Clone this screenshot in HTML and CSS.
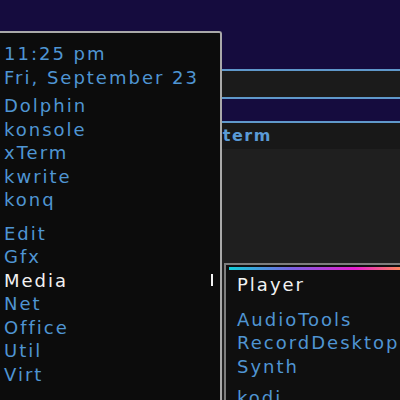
FILE: index.html
```html
<!DOCTYPE html>
<html lang="en">
<head>
    <meta charset="UTF-8">
    <title>Desktop menu</title>
    <link rel="stylesheet" href="styles.css">
</head>
<body>
    <div class="desktop">
        <div class="win win-bar"></div>

        <div class="win win-xterm">
            <div class="title">xterm</div>
            <div class="content"></div>
        </div>

        <div class="menu main-menu">
            <div class="group">
                <div class="item">11:25 pm</div>
                <div class="item">Fri, September 23</div>
            </div>
            <div class="group apps">
                <div class="item">Dolphin</div>
                <div class="item">konsole</div>
                <div class="item">xTerm</div>
                <div class="item">kwrite</div>
                <div class="item">konq</div>
            </div>
            <div class="group cats">
                <div class="item">Edit</div>
                <div class="item">Gfx</div>
                <div class="item active">Media <span class="cursor"></span></div>
                <div class="item">Net</div>
                <div class="item">Office</div>
                <div class="item">Util</div>
                <div class="item">Virt</div>
            </div>
        </div>

        <div class="menu sub-menu">
            <div class="accent"></div>
            <div class="item head">Player</div>
            <div class="group tools">
                <div class="item">AudioTools</div>
                <div class="item">RecordDesktop</div>
                <div class="item">Synth</div>
            </div>
            <div class="group progs">
                <div class="item">kodi</div>
            </div>
        </div>
    </div>
</body>
</html>
```

FILE: styles.css
```css
body {
    margin: 0;
    background: #150c3e;
    font-family: 'DejaVu Sans', sans-serif;
}
.desktop {
    position: relative;
    width: 400px;
    height: 400px;
    overflow: hidden;
    background: #150c3e;
}

/* windows behind the menu */
.win {
    position: absolute;
    left: 200px;
    right: -10px;
}
.win-bar {
    top: 69px;
    height: 26px;
    background: #1b1b1b;
    border-top: 2px solid #5f98cb;
    border-bottom: 2px solid #5f98cb;
}
.win-xterm {
    top: 121px;
    bottom: 0;
    border-top: 2px solid #5f98cb;
    display: flex;
    flex-direction: column;
}
.win-xterm .title {
    height: 26px;
    line-height: 26px;
    background: #181818;
    color: #5a9ad6;
    font-weight: bold;
    font-size: 16px;
    letter-spacing: 1.5px;
    padding-left: 11px;
}
.win-xterm .content {
    flex: 1;
    background: #1f1f1f;
}

/* menus */
.menu {
    position: absolute;
    font-size: 18px;
    line-height: 23.5px;
    letter-spacing: 2px;
    color: #4f95d3;
}
.main-menu {
    left: 0;
    top: 31px;
    bottom: -10px;
    width: 216px;
    padding: 9px 0 0 4px;
    background: #0c0c0c;
    border-top: 2px solid #a9a9a9;
    border-right: 2px solid #a9a9a9;
    border-top-right-radius: 3px;
}
.main-menu .apps {
    margin-top: 5px;
}
.main-menu .cats {
    margin-top: 10px;
}
.item {
    white-space: nowrap;
}
.item.active {
    color: #f2f2f2;
    display: flex;
    justify-content: space-between;
    align-items: center;
    padding-right: 7px;
}
.cursor {
    width: 2px;
    height: 12px;
    background: #f2f2f2;
}

.sub-menu {
    left: 224px;
    top: 263px;
    width: 200px;
    bottom: -20px;
    padding: 2px 0 0 3px;
    background: #0f0f0f;
    border-top: 2px solid #7d7d7d;
    border-left: 2px solid #7d7d7d;
}
.sub-menu .accent {
    height: 3px;
    width: 180px;
    background: linear-gradient(90deg, #12cfd9 0%, #7b62e2 35%, #e61fcf 70%, #ff9a45 100%);
}
.sub-menu .item {
    padding-left: 8px;
}
.sub-menu .head {
    color: #f2f2f2;
    margin-top: 3px;
}
.sub-menu .tools {
    margin-top: 11px;
}
.sub-menu .progs {
    margin-top: 8px;
}
```
